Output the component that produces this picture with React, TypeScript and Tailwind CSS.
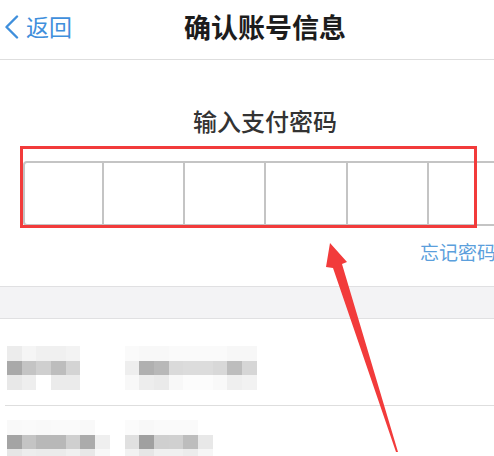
import React from 'react';

const W = '#ffffff';

// pixelated (blurred out) account rows, 17 cells of ~14.7px each
const rowOne: string[][] = [
  ['#ececec', '#f5f5f5', '#f0f0f0', '#f0f0f0', '#f3f3f3', W, W, W, '#fafafa', '#f8f8f8', '#f8f8f8', '#fafafa', '#fafafa', '#fafafa', '#fafafa', '#f7f7f7', '#f7f7f7'],
  ['#a9a9a9', '#c4c4c4', '#cfcfcf', '#bdbdbd', '#d4d4d4', W, W, W, '#eeeeee', '#b0b0b0', '#b8b8b8', '#dadada', '#dcdcdc', '#dcdcdc', '#d8d8d8', '#bdbdbd', '#d6d6d6'],
  ['#e8e8e8', '#eeeeee', W, '#ebebeb', '#ebebeb', W, W, W, '#f8f8f8', '#ededed', '#eaeaea', '#f8f8f8', '#fcfcfc', '#fcfcfc', '#f9f9f9', '#efefef', '#f2f2f2'],
];

const rowTwo: string[][] = [
  ['#f9f9f9', '#fafafa', '#f9f9f9', '#fafafa', '#fafafa', '#f9f9f9', W, W, '#fbfbfb', '#f8f8f8', '#fafafa', '#fafafa', '#fafafa', W, W, W, W],
  ['#a4a4a4', '#c4c4c4', '#b8b8b8', '#b8b8b8', '#cfcfcf', '#ababab', '#efefef', W, '#e0e0e0', '#a0a0a0', '#cfcfcf', '#d0d0d0', '#bdbdbd', '#e8e8e8', W, W, W],
  ['#e6e6e6', '#ededed', '#ebebeb', '#ebebeb', '#f0f0f0', '#e8e8e8', '#f8f8f8', W, '#f2f2f2', '#e6e6e6', '#f0f0f0', '#f0f0f0', '#ececec', '#f6f6f6', W, W, W],
];

const Mosaic: React.FC<{ rows: string[][] }> = ({ rows }) => (
  <div className="flex flex-col pl-[7px]">
    {rows.map((r, i) => (
      <div key={i} className="flex">
        {r.map((c, j) => (
          <div key={j} className="w-[14.7px] h-[14.7px]" style={{ backgroundColor: c }} />
        ))}
      </div>
    ))}
  </div>
);

export default function App() {
  return (
    <div className="relative w-[494px] h-[456px] overflow-hidden bg-white font-['Noto_Sans_CJK_SC','Noto_Sans',sans-serif]">
      <div className="w-[530px]">
        {/* nav bar */}
        <div className="grid grid-cols-[1fr_auto_1fr] items-center h-[60px] pb-[6px] border-b border-[#dedede]">
          <div className="flex items-center gap-[6px] pl-[4px] text-[#3f8fdc]">
            <svg width="16" height="24" viewBox="0 0 16 24" fill="none">
              <polyline points="13,1.5 2.5,12 13,22.5" stroke="currentColor" strokeWidth="2.4" strokeLinecap="round" strokeLinejoin="round" />
            </svg>
            <span className="text-[23px] leading-none">返回</span>
          </div>
          <h1 className="text-[27px] leading-none font-bold text-[#1c1c1c]">确认账号信息</h1>
          <div />
        </div>

        {/* password entry */}
        <div className="flex flex-col">
          <p className="mt-[49px] text-center text-[24px] leading-none font-medium text-[#333333]">输入支付密码</p>
          <div className="mt-[28px] ml-[23px] flex h-[65px] border-2 border-[#c4c4c4] rounded-[4px] bg-white">
            {[0, 1, 2, 3, 4, 5].map(i => (
              <div key={i} className={`shrink-0 ${i > 0 ? 'w-[81.2px] border-l-2 border-[#c4c4c4]' : 'w-[77px]'}`} />
            ))}
          </div>
          <div className="flex justify-end pr-[34px] mt-[16px]">
            <span className="text-[19px] leading-none text-[#5b9fdc]">忘记密码</span>
          </div>
        </div>

        {/* gray gap */}
        <div className="mt-[25px] h-[33px] bg-[#f3f3f5] border-y border-[#e0e0e2]" />

        {/* blurred rows */}
        <div className="pt-[27px] pb-[15px] border-b border-[#dedede] ml-[5px]">
          <div className="-ml-[5px]">
            <Mosaic rows={rowOne} />
          </div>
        </div>
        <div className="pt-[14px]">
          <Mosaic rows={rowTwo} />
        </div>
      </div>

      {/* red annotation box */}
      <div className="absolute left-[20px] top-[146px] w-[457px] h-[82px] border-[3px] border-[#f23b3b]" />

      {/* red arrow */}
      <svg className="absolute left-0 top-0" width="494" height="456" viewBox="0 0 494 456">
        <polygon points="330,243 347,262 342,264 398,452 396,452 333,268 326,267" fill="#f23b3b" />
      </svg>
    </div>
  );
}
